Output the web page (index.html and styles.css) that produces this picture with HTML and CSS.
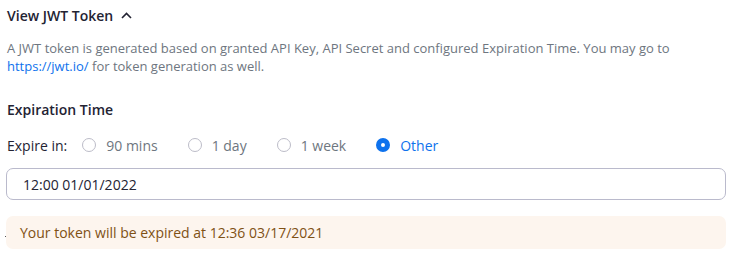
FILE: index.html
```html
<!DOCTYPE html>
<html>
<head>
<meta charset="utf-8">
<link rel="stylesheet" href="styles.css">
</head>
<body>
<div class="panel">
  <div class="toggle">
    <span>View JWT Token</span>
    <svg class="chev" width="11" height="7" viewBox="0 0 11 7"><path d="M1 6 L5.5 1.5 L10 6" fill="none" stroke="#232333" stroke-width="1.6"/></svg>
  </div>
  <p class="desc">A JWT token is generated based on granted API Key, API Secret and configured Expiration Time. You may go to <a href="#" class="link">https://jwt.io/</a> for token generation as well.</p>
  <h3 class="label">Expiration Time</h3>
  <div class="radios">
    <span class="radios-title">Expire in:</span>
    <label class="radio"><span class="circle"></span>90 mins</label>
    <label class="radio"><span class="circle"></span>1 day</label>
    <label class="radio"><span class="circle"></span>1 week</label>
    <label class="radio checked"><span class="circle"></span>Other</label>
  </div>
  <div class="input">12:00 01/01/2022</div>
  <div class="alert-row"><span class="dot"></span><div class="alert">Your token will be expired at 12:36 03/17/2021</div></div>
</div>
</body>
</html>
```
FILE: styles.css
```css
html, body { margin: 0; padding: 0; background: #fff; }
body { font-family: "Open Sans", "Liberation Sans", sans-serif; color: #232333; }
.panel { padding: 3px 16px 0 6px; }
.toggle { display: flex; align-items: center; gap: 7px; height: 24px; font-size: 14px; font-weight: 600; padding-left: 1px; color: #232333; }
.chev { margin-top: 1px; margin-left: 1px; }
.desc { margin: 12px 0 0 1px; font-size: 13px; line-height: 18px; color: #6e7680; }
.link { color: #0e72ed; text-decoration: none; }
.label { margin: 25px 0 0 1px; font-size: 14px; font-weight: 600; line-height: 20px; color: #232333; }
.radios { display: flex; align-items: center; margin-top: 15px; height: 20px; font-size: 14px; color: #232333; padding-left: 1px; }
.radios-title { margin-right: 15px; }
.radio { display: flex; align-items: center; gap: 10px; margin-right: 30px; color: #6e7680; }
.circle { width: 12px; height: 12px; border: 1px solid #bcbcc8; border-radius: 50%; box-sizing: content-box; }
.radio.checked { color: #0e72ed; }
.radio.checked .circle { width: 4px; height: 4px; border: 5px solid #0e72ed; }
.input { margin-top: 13px; height: 30px; border: 1px solid #babacc; border-radius: 7px; display: flex; align-items: center; padding-left: 16px; font-size: 14px; color: #232333; }
.alert-row { position: relative; margin-top: 16px; }
.dot { position: absolute; left: -1px; top: 20px; width: 1px; height: 1px; background: #555; }
.alert { height: 33px; border-radius: 7px; background: #fdf5ee; display: flex; align-items: center; padding-left: 14px; font-size: 14px; color: #7f5115; }
```
